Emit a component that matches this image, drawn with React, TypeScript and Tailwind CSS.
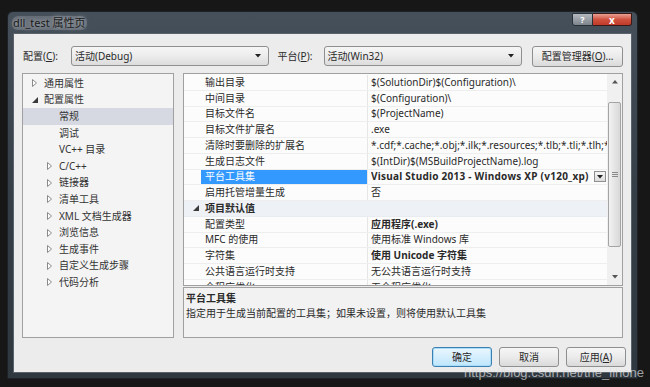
import React from 'react'

type TreeItem = { label: string; level: 0 | 1; arrow?: 'open' | 'closed'; selected?: boolean }

const treeItems: TreeItem[] = [
  { label: '通用属性', level: 0, arrow: 'closed' },
  { label: '配置属性', level: 0, arrow: 'open' },
  { label: '常规', level: 1, selected: true },
  { label: '调试', level: 1 },
  { label: 'VC++ 目录', level: 1 },
  { label: 'C/C++', level: 1, arrow: 'closed' },
  { label: '链接器', level: 1, arrow: 'closed' },
  { label: '清单工具', level: 1, arrow: 'closed' },
  { label: 'XML 文档生成器', level: 1, arrow: 'closed' },
  { label: '浏览信息', level: 1, arrow: 'closed' },
  { label: '生成事件', level: 1, arrow: 'closed' },
  { label: '自定义生成步骤', level: 1, arrow: 'closed' },
  { label: '代码分析', level: 1, arrow: 'closed' },
]

type GridRow =
  | { kind: 'category'; name: string }
  | { kind: 'prop'; name: string; value: string; bold?: boolean; selected?: boolean }

const gridRows: GridRow[] = [
  { kind: 'prop', name: '输出目录', value: '$(SolutionDir)$(Configuration)\\' },
  { kind: 'prop', name: '中间目录', value: '$(Configuration)\\' },
  { kind: 'prop', name: '目标文件名', value: '$(ProjectName)' },
  { kind: 'prop', name: '目标文件扩展名', value: '.exe' },
  {
    kind: 'prop',
    name: '清除时要删除的扩展名',
    value: '*.cdf;*.cache;*.obj;*.ilk;*.resources;*.tlb;*.tli;*.tlh;*.tmp;*.rsp;*.pgc;*.pgd;*.meta;$(TargetPath)',
  },
  { kind: 'prop', name: '生成日志文件', value: '$(IntDir)$(MSBuildProjectName).log' },
  { kind: 'prop', name: '平台工具集', value: 'Visual Studio 2013 - Windows XP (v120_xp)', bold: true, selected: true },
  { kind: 'prop', name: '启用托管增量生成', value: '否' },
  { kind: 'category', name: '项目默认值' },
  { kind: 'prop', name: '配置类型', value: '应用程序(.exe)', bold: true },
  { kind: 'prop', name: 'MFC 的使用', value: '使用标准 Windows 库' },
  { kind: 'prop', name: '字符集', value: '使用 Unicode 字符集', bold: true },
  { kind: 'prop', name: '公共语言运行时支持', value: '无公共语言运行时支持' },
  { kind: 'prop', name: '全程序优化', value: '无全程序优化' },
]

function Arrow({ open }: { open: boolean }) {
  if (open) {
    return (
      <svg width="6" height="6" viewBox="0 0 6 6">
        <path d="M6 0V6H0Z" fill="#3a3a3a" />
      </svg>
    )
  }
  return (
    <svg width="5" height="8" viewBox="0 0 5 8">
      <path d="M0.5 0.5L4.5 4L0.5 7.5Z" fill="#fff" stroke="#8a8a8a" />
    </svg>
  )
}

function DownTri({ color = '#222' }: { color?: string }) {
  return (
    <svg width="6" height="4" viewBox="0 0 6 4">
      <path d="M0 0H6L3 3.5Z" fill={color} />
    </svg>
  )
}

function Combo({ text, width }: { text: string; width: string }) {
  return (
    <div
      className={`${width} flex h-[20px] items-center justify-between rounded-[3px] border border-[#8e8f8f] bg-gradient-to-b from-[#f6f6f6] via-[#ececec] to-[#dcdcdc] pl-[3px] pr-[7px]`}
    >
      <span>{text}</span>
      <DownTri />
    </div>
  )
}

function Button({ children, primary }: { children: React.ReactNode; primary?: boolean }) {
  return (
    <div
      className={`flex h-[20px] w-[60px] items-center justify-center rounded-[3px] border ${
        primary
          ? 'border-[#3c7fb1] bg-gradient-to-b from-[#eaf6fd] to-[#bee6fd] shadow-[inset_0_0_0_1px_#a8dcf8]'
          : 'border-[#8e8f8f] bg-gradient-to-b from-[#f6f6f6] via-[#ebebeb] to-[#dadada]'
      }`}
    >
      {children}
    </div>
  )
}

function Scrollbar() {
  return (
    <div className="flex w-[15px] flex-col items-center bg-[#f0f0f0]">
      <div className="flex h-[16px] items-center justify-center">
        <svg width="6" height="4" viewBox="0 0 6 4">
          <path d="M0 3.5H6L3 0Z" fill="#555" />
        </svg>
      </div>
      <div className="mt-[12px] flex h-[145px] w-[13px] items-center justify-center rounded-[2px] border border-[#a4a4a4] bg-gradient-to-r from-[#f2f2f2] to-[#d8d8d8]">
        <div className="flex flex-col gap-[1px]">
          <div className="h-[1px] w-[6px] bg-[#8a8a8a]" />
          <div className="h-[1px] w-[6px] bg-[#8a8a8a]" />
          <div className="h-[1px] w-[6px] bg-[#8a8a8a]" />
        </div>
      </div>
      <div className="mt-auto flex h-[16px] items-center justify-center">
        <DownTri color="#555" />
      </div>
    </div>
  )
}

export default function App() {
  return (
    <div className="relative h-[387px] w-[650px] overflow-hidden bg-[#171717] pl-[7px] pt-[11px] font-['Noto_Sans','Noto_Sans_CJK_SC',sans-serif] text-[10px] leading-[15px] text-[#2a2a2a]">
      <div className="flex h-[368px] w-[631px] flex-col rounded-t-[6px] border border-[#1c2228] bg-gradient-to-b from-[#46505a] via-[#353e47] to-[#2f373f]">
        {/* title bar */}
        <div className="flex h-[21px] items-start">
          <span className="ml-[4px] mt-[4px] rounded-[6px] bg-[#717881]/70 px-[1px] text-[11px] leading-[14px] text-[#1a1a1a] [text-shadow:0_0_4px_#c8ccd0]">
            dll_test 属性页
          </span>
          <div className="ml-auto mr-[5px] mt-[1px] flex">
            <div className="flex h-[13px] w-[21px] items-center justify-center rounded-bl-[3px] border border-[#2a3038] bg-gradient-to-b from-[#b4bac0] to-[#7d848b] text-[9px] font-bold leading-none text-white">
              ?
            </div>
            <div className="flex h-[13px] w-[39px] items-center justify-center rounded-br-[3px] border border-l-0 border-[#3a1a18] bg-gradient-to-b from-[#e8a093] via-[#d0513f] to-[#c03a28] text-[10px] font-bold leading-none text-white">
              x
            </div>
          </div>
        </div>

        {/* client area */}
        <div className="mx-[5px] mb-[5px] flex flex-1 flex-col border border-[#5a636c] bg-[#ececec] px-[8px] pt-[12px]">
          <div className="flex h-[20px] items-center">
            <span className="w-[49px] pl-[1px]">
              配置(<span className="underline">C</span>):
            </span>
            <Combo text="活动(Debug)" width="w-[198px]" />
            <span className="ml-[9px] w-[46px]">
              平台(<span className="underline">P</span>):
            </span>
            <Combo text="活动(Win32)" width="w-[199px]" />
            <div className="ml-[10px] flex h-[21px] w-[91px] items-center justify-center rounded-[3px] border border-[#8e8f8f] bg-gradient-to-b from-[#f6f6f6] via-[#ebebeb] to-[#dadada]">
              配置管理器(<span className="underline">O</span>)...
            </div>
          </div>

          <div className="mt-[7px] flex h-[265px] gap-[9px]">
            {/* tree */}
            <div className="w-[154px] border border-[#a0a0a0] bg-[#f4f4f4] pt-[1px] text-[#333]">
              {treeItems.map((item) => (
                <div
                  key={item.label}
                  className={`flex h-[16.6px] items-center ${item.level === 0 ? 'pl-[9px]' : 'pl-[24px]'} ${
                    item.selected ? 'bg-[#d6d9e2]' : ''
                  }`}
                >
                  <span className="flex w-[12px] items-center">
                    {item.arrow && <Arrow open={item.arrow === 'open'} />}
                  </span>
                  <span>{item.label}</span>
                </div>
              ))}
            </div>

            {/* grid + description */}
            <div className="flex w-[440px] flex-col">
              <div className="flex h-[213px] border border-[#a0a0a0] bg-[#fcfcfc]">
                <div className="flex-1 overflow-hidden pt-[1px]">
                  {gridRows.map((row) =>
                    row.kind === 'category' ? (
                      <div key={row.name} className="flex h-[15.75px] items-center border-b border-[#e8ebf0] bg-[#eef1f6]">
                        <span className="flex w-[21px] justify-center pl-[2px]">
                          <Arrow open />
                        </span>
                        <span className="font-bold">{row.name}</span>
                      </div>
                    ) : (
                      <div key={row.name} className="flex h-[15.75px] border-b border-[#eeeeee]">
                        <span className="w-[17px]" />
                        <span
                          className={`flex w-[166px] items-center pl-[4px] ${
                            row.selected ? 'bg-[#3399ff] text-white' : ''
                          }`}
                        >
                          {row.name}
                        </span>
                        <span className="flex min-w-0 flex-1 items-center border-l border-[#e6e6e6] pl-[3px]">
                          <span
                            className={`flex-1 overflow-hidden whitespace-nowrap ${row.bold ? 'font-bold' : ''} ${
                              row.selected ? 'tracking-[0.25px]' : ''
                            }`}
                          >
                            {row.value}
                          </span>
                          {row.selected && (
                            <span className="ml-[3px] mr-[1px] flex h-[11px] w-[12px] items-center justify-center border border-[#8e8f8f] bg-gradient-to-b from-[#f6f6f6] to-[#dcdcdc]">
                              <DownTri />
                            </span>
                          )}
                        </span>
                      </div>
                    ),
                  )}
                </div>
                <Scrollbar />
              </div>
              <div className="mt-[1px] h-[51px] border border-[#a0a0a0] bg-[#f2f2f2] pl-[2px] pt-[3px]">
                <div className="font-bold">平台工具集</div>
                <div>指定用于生成当前配置的工具集；如果未设置，则将使用默认工具集</div>
              </div>
            </div>
          </div>

          <div className="mr-[-3px] mt-[9px] flex justify-end gap-[7px]">
            <Button primary>确定</Button>
            <Button>取消</Button>
            <Button>
              <span>
                应用(<span className="underline">A</span>)
              </span>
            </Button>
          </div>
        </div>
      </div>

      <span className="absolute left-[464px] top-[364px] font-['Liberation_Sans',sans-serif] text-[13px] leading-[17px] text-[#e0e0e0]/70">
        https://blog.csdn.net/the_lihone
      </span>
    </div>
  )
}
